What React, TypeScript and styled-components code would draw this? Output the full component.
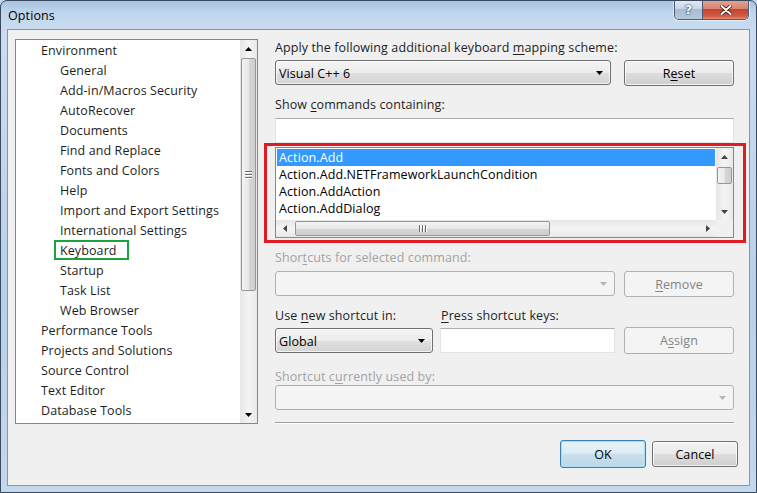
import React from "react";
import styled, { createGlobalStyle, css } from "styled-components";

const GlobalStyle = createGlobalStyle`
  html, body {
    margin: 0;
    padding: 0;
    background: #c4d8ee;
  }

  body {
    font-family: "Open Sans", "Noto Sans", sans-serif;
    font-size: 12.5px;
    letter-spacing: 0.1px;
    color: #1e1e1e;
  }
`;

type Dir = "up" | "down" | "left" | "right";

const Arrow = ({ dir, color = "#000" }: { dir: Dir; color?: string }) => {
  const pts: Record<Dir, string> = {
    up: "0,4 3.5,0 7,4",
    down: "0,0 7,0 3.5,4",
    left: "4,0 4,7 0,3.5",
    right: "0,0 4,3.5 0,7",
  };
  const vertical = dir === "up" || dir === "down";
  return (
    <svg width={vertical ? 7 : 4} height={vertical ? 4 : 7}>
      <polygon points={pts[dir]} fill={color} />
    </svg>
  );
};

const treeItems: { label: string; level: number; boxed?: boolean }[] = [
  { label: "Environment", level: 0 },
  { label: "General", level: 1 },
  { label: "Add-in/Macros Security", level: 1 },
  { label: "AutoRecover", level: 1 },
  { label: "Documents", level: 1 },
  { label: "Find and Replace", level: 1 },
  { label: "Fonts and Colors", level: 1 },
  { label: "Help", level: 1 },
  { label: "Import and Export Settings", level: 1 },
  { label: "International Settings", level: 1 },
  { label: "Keyboard", level: 1, boxed: true },
  { label: "Startup", level: 1 },
  { label: "Task List", level: 1 },
  { label: "Web Browser", level: 1 },
  { label: "Performance Tools", level: 0 },
  { label: "Projects and Solutions", level: 0 },
  { label: "Source Control", level: 0 },
  { label: "Text Editor", level: 0 },
  { label: "Database Tools", level: 0 },
];

const commands = [
  "Action.Add",
  "Action.Add.NETFrameworkLaunchCondition",
  "Action.AddAction",
  "Action.AddDialog",
];

const App = () => {
  return (
    <>
      <GlobalStyle />
      <Window>
        <TitleBar>
          <Caption>Options</Caption>
          <CaptionButtons>
            <HelpButton>?</HelpButton>
            <CloseButton>
              <svg width="12" height="10" viewBox="0 0 12 10">
                <path
                  d="M1.5 1 L10.5 9 M10.5 1 L1.5 9"
                  stroke="#3a1410"
                  strokeWidth="3.6"
                  strokeLinecap="round"
                />
                <path
                  d="M1.5 1 L10.5 9 M10.5 1 L1.5 9"
                  stroke="#fff"
                  strokeWidth="2"
                  strokeLinecap="round"
                />
              </svg>
            </CloseButton>
          </CaptionButtons>
        </TitleBar>

        <Client>
          <MainRow>
            <Tree>
              <TreeList>
                {treeItems.map((item) => (
                  <TreeItem key={item.label} $level={item.level}>
                    {item.boxed ? <FocusBox>{item.label}</FocusBox> : item.label}
                  </TreeItem>
                ))}
              </TreeList>
              <VScroll>
                <ArrowCell>
                  <Arrow dir="up" />
                </ArrowCell>
                <VThumb $height={233}>
                  <VGrip>
                    <span />
                    <span />
                    <span />
                  </VGrip>
                </VThumb>
                <Track />
                <ArrowCell>
                  <Arrow dir="down" />
                </ArrowCell>
              </VScroll>
            </Tree>

            <Panel>
              <Label>
                Apply the following additional keyboard <u>m</u>apping scheme:
              </Label>
              <Row $top={5}>
                <Combo $width={336}>
                  <span>Visual C++ 6</span>
                  <Arrow dir="down" />
                </Combo>
                <Button>
                  R<u>e</u>set
                </Button>
              </Row>

              <Label $top={10}>
                Show <u>c</u>ommands containing:
              </Label>
              <TextBox $width={459} $top={6} />

              <Highlight>
                <ListBox>
                  <ListItems>
                    {commands.map((c, i) => (
                      <ListItem key={c} $selected={i === 0}>
                        {c}
                      </ListItem>
                    ))}
                  </ListItems>
                  <VScroll>
                    <ArrowCell>
                      <Arrow dir="up" color="#444" />
                    </ArrowCell>
                    <VThumb $height={17} $offset={2} />
                    <Track />
                    <ArrowCell>
                      <Arrow dir="down" color="#444" />
                    </ArrowCell>
                  </VScroll>
                  <HScroll>
                    <ArrowCell>
                      <Arrow dir="left" color="#444" />
                    </ArrowCell>
                    <HThumb $width={255}>
                      <HGrip>
                        <span />
                        <span />
                        <span />
                      </HGrip>
                    </HThumb>
                    <Track />
                    <ArrowCell>
                      <Arrow dir="right" color="#444" />
                    </ArrowCell>
                  </HScroll>
                  <Corner />
                </ListBox>
              </Highlight>

              <Label $top={6} $disabled>
                Shor<u>t</u>cuts for selected command:
              </Label>
              <Row $top={6}>
                <Combo $width={340} $disabled>
                  <span />
                  <Arrow dir="down" color="#b4b4b4" />
                </Combo>
                <Button $disabled>
                  <u>R</u>emove
                </Button>
              </Row>

              <ShortcutGrid>
                <Label>
                  Use <u>n</u>ew shortcut in:
                </Label>
                <Label>
                  <u>P</u>ress shortcut keys:
                </Label>
                <span />
                <Combo $width={158} $top={1}>
                  <span>Global</span>
                  <Arrow dir="down" />
                </Combo>
                <TextBox $width={175} $top={1} />
                <Button $disabled $height={27}>
                  A<u>s</u>sign
                </Button>
              </ShortcutGrid>

              <Label $top={14} $disabled>
                Shortcut c<u>u</u>rrently used by:
              </Label>
              <Combo $width={459} $top={1} $disabled>
                <span />
                <Arrow dir="down" color="#b4b4b4" />
              </Combo>
              <Separator />
            </Panel>
          </MainRow>

          <Footer>
            <Button $default $width={86} $height={28}>
              OK
            </Button>
            <Button $width={86}>Cancel</Button>
          </Footer>
        </Client>
      </Window>
    </>
  );
};

export default App;

const Window = styled.div`
  width: 757px;
  height: 493px;
  box-sizing: border-box;
  display: flex;
  flex-direction: column;
  padding: 0 6px 6px 6px;
  border: 1px solid #3a4a5e;
  border-radius: 7px 7px 0 0;
  background: linear-gradient(
    180deg,
    #a9c3df 0px,
    #c0d6ee 12px,
    #cadcf0 30px,
    #b9d0ea 60%,
    #c3d7ee 100%
  );
  overflow: hidden;
`;

const TitleBar = styled.div`
  height: 28px;
  display: flex;
  justify-content: space-between;
  align-items: flex-start;
  padding-left: 1px;
`;

const Caption = styled.div`
  margin-top: 7px;
  font-size: 12.5px;
  line-height: 16px;
  color: #000;
`;

const CaptionButtons = styled.div`
  display: flex;
  margin-top: -1px;
  margin-right: 1px;
  border: 1px solid #4b5c74;
  border-top: none;
  border-radius: 0 0 5px 5px;
  overflow: hidden;
  box-shadow: 0 0 0 1px rgba(255, 255, 255, 0.5);
`;

const HelpButton = styled.div`
  width: 27px;
  height: 19px;
  display: flex;
  align-items: center;
  justify-content: center;
  font-family: "DejaVu Sans", sans-serif;
  font-size: 13px;
  font-weight: bold;
  color: #fff;
  text-shadow: 0 0 2px #1d2a3a, 0 0 1px #1d2a3a;
  background: linear-gradient(180deg, #e2ebf5 0%, #c7d6e7 45%, #a9bcd3 50%, #b6c8dd 100%);
  border-right: 1px solid #4b5c74;
`;

const CloseButton = styled.div`
  width: 45px;
  height: 19px;
  display: flex;
  align-items: center;
  justify-content: center;
  background: linear-gradient(180deg, #e8a493 0%, #d88473 45%, #c4442f 50%, #d25a42 85%, #e58d6e 100%);
`;

const Client = styled.div`
  flex: 1;
  display: flex;
  flex-direction: column;
  background: #f0f0f0;
  border: 1px solid #8497b0;
  padding: 9px 11px 0 7px;
`;

const MainRow = styled.div`
  display: flex;
  gap: 17px;
  height: 385px;
`;

const Tree = styled.div`
  width: 243px;
  box-sizing: border-box;
  display: flex;
  border: 1px solid #828790;
  background: #fff;
`;

const TreeList = styled.div`
  flex: 1;
  display: flex;
  flex-direction: column;
  overflow: hidden;
`;

const TreeItem = styled.div<{ $level: number }>`
  height: 20px;
  line-height: 22px;
  padding-left: ${(p) => (p.$level === 0 ? 25 : 44)}px;
  white-space: nowrap;
`;

const FocusBox = styled.span`
  display: inline-block;
  box-sizing: border-box;
  height: 20px;
  line-height: 18px;
  margin-left: -6px;
  padding: 0 10px 0 4px;
  border: 2px solid #1aa33e;
  vertical-align: top;
`;

const VScroll = styled.div`
  width: 17px;
  display: flex;
  flex-direction: column;
  background: linear-gradient(90deg, #e6e6e6, #f4f4f4 50%, #e9e9e9);
`;

const HScroll = styled.div`
  height: 17px;
  display: flex;
  background: linear-gradient(180deg, #e6e6e6, #f4f4f4 50%, #e9e9e9);
`;

const ArrowCell = styled.div`
  width: 17px;
  height: 17px;
  flex-shrink: 0;
  display: flex;
  align-items: center;
  justify-content: center;
`;

const Track = styled.div`
  flex: 1;
`;

const thumbBase = css`
  box-sizing: border-box;
  border: 1px solid #979797;
  border-radius: 2px;
  display: flex;
  align-items: center;
  justify-content: center;
`;

const VThumb = styled.div<{ $height: number; $offset?: number }>`
  ${thumbBase};
  height: ${(p) => p.$height}px;
  margin: ${(p) => p.$offset ?? 1}px 1px 0 1px;
  background: linear-gradient(90deg, #f3f3f3, #e8e8e8 50%, #d6d6d6 51%, #cfcfcf);
`;

const HThumb = styled.div<{ $width: number }>`
  ${thumbBase};
  width: ${(p) => p.$width}px;
  margin: 1px 0 1px 2px;
  background: linear-gradient(180deg, #f3f3f3, #e8e8e8 50%, #d6d6d6 51%, #cfcfcf);
`;

const VGrip = styled.div`
  display: flex;
  flex-direction: column;
  gap: 1px;

  span {
    width: 7px;
    height: 1px;
    background: #6b6b6b;
    box-shadow: 0 1px 0 #fff;
    margin-bottom: 1px;
  }
`;

const HGrip = styled.div`
  display: flex;
  gap: 2px;

  span {
    width: 1px;
    height: 7px;
    background: #6b6b6b;
    box-shadow: 1px 0 0 #fff;
  }
`;

const Panel = styled.div`
  width: 459px;
  display: flex;
  flex-direction: column;
`;

const Label = styled.div<{ $top?: number; $disabled?: boolean }>`
  height: 16px;
  line-height: 18px;
  margin-top: ${(p) => p.$top ?? 0}px;
  color: ${(p) => (p.$disabled ? "#a3a3a3" : "#1e1e1e")};
  white-space: nowrap;

  u {
    text-underline-offset: 2px;
  }
`;

const Row = styled.div<{ $top?: number }>`
  display: flex;
  justify-content: space-between;
  align-items: flex-start;
  margin-top: ${(p) => p.$top ?? 0}px;
`;

const Combo = styled.div<{ $width: number; $top?: number; $disabled?: boolean }>`
  width: ${(p) => p.$width}px;
  height: 25px;
  box-sizing: border-box;
  margin-top: ${(p) => p.$top ?? 0}px;
  display: flex;
  align-items: center;
  justify-content: space-between;
  padding: 1px 7px 0 3px;
  border: 1px solid ${(p) => (p.$disabled ? "#adb2b5" : "#707070")};
  border-radius: 3px;
  background: ${(p) =>
    p.$disabled
      ? "#f4f4f4"
      : "linear-gradient(180deg, #f4f4f4 0%, #ececec 50%, #e0e0e0 51%, #d4d4d4 100%)"};
  box-shadow: ${(p) => (p.$disabled ? "none" : "inset 0 0 0 1px rgba(255,255,255,0.7)")};
  color: #000;
`;

const Button = styled.div<{
  $width?: number;
  $height?: number;
  $disabled?: boolean;
  $default?: boolean;
}>`
  width: ${(p) => p.$width ?? 110}px;
  height: ${(p) => p.$height ?? 26}px;
  box-sizing: border-box;
  display: flex;
  align-items: center;
  justify-content: center;
  border-radius: 3px;
  border: 1px solid #707070;
  background: linear-gradient(180deg, #f2f2f2 0%, #ebebeb 50%, #dddddd 51%, #cfcfcf 100%);
  box-shadow: inset 0 0 0 1px rgba(255, 255, 255, 0.75);
  color: #000;

  u {
    text-underline-offset: 2px;
  }

  ${(p) =>
    p.$disabled &&
    css`
      border-color: #adb2b5;
      background: #f4f4f4;
      box-shadow: none;
      color: #838383;
    `}

  ${(p) =>
    p.$default &&
    css`
      border-color: #3c7fb1;
      background: linear-gradient(180deg, #e9f3f9 0%, #dcebf4 50%, #c9dfec 51%, #bcd6e6 100%);
      box-shadow: inset 0 0 0 1px #a7dcf5, inset 0 0 2px 1px #cdeefc;
    `}
`;

const TextBox = styled.div<{ $width: number; $top?: number }>`
  width: ${(p) => p.$width}px;
  height: 25px;
  box-sizing: border-box;
  margin-top: ${(p) => p.$top ?? 0}px;
  background: #fff;
  border: 1px solid #e2e3ea;
  border-top-color: #abadb3;
`;

const Highlight = styled.div`
  margin: 0 -12px 0 -11px;
  padding: 1px 9px 2px 8px;
  border: 3px solid #e01b22;
`;

const ListBox = styled.div`
  height: 91px;
  box-sizing: border-box;
  border: 1px solid #828790;
  background: #fff;
  display: grid;
  grid-template-columns: 1fr 17px;
  grid-template-rows: 1fr 17px;
`;

const ListItems = styled.div`
  padding: 1px;
  overflow: hidden;
`;

const ListItem = styled.div<{ $selected?: boolean }>`
  height: 17px;
  line-height: 18px;
  padding-left: 2px;
  white-space: nowrap;
  background: ${(p) => (p.$selected ? "#3399ff" : "transparent")};
  color: ${(p) => (p.$selected ? "#fff" : "#000")};
`;

const Corner = styled.div`
  background: #f0f0f0;
`;

const ShortcutGrid = styled.div`
  display: grid;
  grid-template-columns: 158px 175px 110px;
  column-gap: 8px;
  row-gap: 4px;
  align-items: start;
  margin-top: 10px;

  & > :nth-child(5) {
    margin-left: -1px;
  }
`;

const Separator = styled.div`
  margin-top: 12px;
  height: 1px;
  background: #a0a0a0;
  border-bottom: 1px solid #fff;
`;

const Footer = styled.div`
  display: flex;
  justify-content: flex-end;
  align-items: center;
  gap: 6px;
  margin-top: 16px;
`;
